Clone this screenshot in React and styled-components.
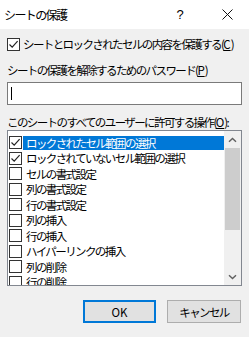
import React from "react";
import styled, { createGlobalStyle } from "styled-components";

const Global = createGlobalStyle`
  html, body { margin: 0; padding: 0; background: #f0f0f0; }
  body { width: 249px; height: 337px; overflow: hidden; }
  * { box-sizing: border-box; }
`;

const FONT = `"Noto Sans CJK JP", "Noto Sans", sans-serif`;

const Window = styled.div`
  width: 249px;
  height: 337px;
  display: flex;
  flex-direction: column;
  font-family: ${FONT};
  font-size: 11.5px;
  letter-spacing: -1.6px;
  color: #000;
  white-space: nowrap;
`;

const TitleBar = styled.div`
  height: 29px;
  flex: none;
  background: #fff;
  display: flex;
  align-items: center;
  padding-left: 4px;
`;

const Title = styled.div`
  flex: 1;
  font-size: 12px;
  line-height: 14px;
`;

const TitleButton = styled.div`
  width: ${(p) => p.$w}px;
  margin-right: ${(p) => p.$mr}px;
  height: 29px;
  display: flex;
  align-items: center;
  justify-content: center;
  font-size: 13px;
  font-family: "Liberation Sans", sans-serif;
  letter-spacing: 0;
`;

const Body = styled.div`
  flex: 1;
  background: #f0f0f0;
  padding: 7px 7px 0 7px;
  display: flex;
  flex-direction: column;
`;

const CheckRow = styled.label`
  display: flex;
  align-items: center;
  height: 16px;
  gap: 3px;
  line-height: 14px;
`;

const Box = styled.span`
  width: 13px;
  height: 13px;
  flex: none;
  background: #fff;
  border: 1px solid #333;
  display: flex;
  align-items: center;
  justify-content: center;
`;

const Label = styled.div`
  line-height: 14px;
  margin-top: ${(p) => p.$mt}px;
`;

const U = styled.span`
  text-decoration: underline;
  text-underline-offset: 1px;
  letter-spacing: 0;
`;

const Input = styled.div`
  margin-top: 5px;
  height: 23px;
  width: 235px;
  background: #fff;
  border: 1px solid #7a7a7a;
  display: flex;
  align-items: center;
  padding-left: 3px;
`;

const Caret = styled.span`
  width: 1px;
  height: 13px;
  background: #000;
`;

const ListBox = styled.div`
  margin-top: 1px;
  height: 156px;
  width: 235px;
  background: #fff;
  border: 1px solid #828790;
  display: flex;
  overflow: hidden;
`;

const Items = styled.div`
  flex: 1;
  padding-top: 4px;
  padding-left: 1px;
  display: flex;
  flex-direction: column;
`;

const Item = styled.div`
  height: 15.5px;
  flex: none;
  display: flex;
  align-items: center;
`;

const ItemText = styled.span`
  flex: 1;
  height: 14px;
  line-height: 14px;
  margin-left: 1px;
  padding-left: 3px;
  background: ${(p) => (p.$sel ? "#0078d7" : "transparent")};
  color: ${(p) => (p.$sel ? "#fff" : "#000")};
`;

const ScrollBar = styled.div`
  width: 17px;
  flex: none;
  background: #f0f0f0;
  display: flex;
  flex-direction: column;
`;

const Arrow = styled.div`
  height: 17px;
  flex: none;
  display: flex;
  align-items: center;
  justify-content: center;
`;

const Thumb = styled.div`
  height: 82px;
  margin: 0 1px;
  background: #cdcdcd;
  flex: none;
`;

const Track = styled.div`
  flex: 1;
`;

const Buttons = styled.div`
  margin-top: 14px;
  display: flex;
  justify-content: flex-end;
  gap: 11px;
  padding-right: 1px;
`;

const Button = styled.div`
  width: ${(p) => p.$w}px;
  height: 23px;
  background: #e1e1e1;
  border: ${(p) => (p.$default ? "2px solid #0078d7" : "1px solid #adadad")};
  display: flex;
  align-items: center;
  justify-content: center;
  line-height: 14px;
  letter-spacing: ${(p) => (p.$default ? "0" : "-1.6px")};
`;

const Check = () => (
  <svg width="11" height="11" viewBox="0 0 11 11">
    <path d="M1.5 5.5 L4.2 8.2 L9.6 2.2" fill="none" stroke="#222" strokeWidth="1.2" />
  </svg>
);

const Chevron = ({ down }) => (
  <svg width="9" height="6" viewBox="0 0 9 6">
    <path
      d={down ? "M1 1.2 L4.5 4.6 L8 1.2" : "M1 4.8 L4.5 1.4 L8 4.8"}
      fill="none"
      stroke="#606060"
      strokeWidth="1.4"
    />
  </svg>
);

const items = [
  ["ロックされたセル範囲の選択", true, true],
  ["ロックされていないセル範囲の選択", true, false],
  ["セルの書式設定", false, false],
  ["列の書式設定", false, false],
  ["行の書式設定", false, false],
  ["列の挿入", false, false],
  ["行の挿入", false, false],
  ["ハイパーリンクの挿入", false, false],
  ["列の削除", false, false],
  ["行の削除", false, false],
];

export default function App() {
  return (
    <>
      <Global />
      <Window>
        <TitleBar>
          <Title>シートの保護</Title>
          <TitleButton $w={20} $mr={22}>?</TitleButton>
          <TitleButton $w={30} $mr={7}>
            <svg width="11" height="11" viewBox="0 0 11 11">
              <path d="M0.5 0.5 L10.5 10.5 M10.5 0.5 L0.5 10.5" stroke="#111" strokeWidth="1" />
            </svg>
          </TitleButton>
        </TitleBar>
        <Body>
          <CheckRow>
            <Box>
              <Check />
            </Box>
            <span>
              シートとロックされたセルの内容を保護する(<U>C</U>)
            </span>
          </CheckRow>
          <Label $mt={11}>
            シートの保護を解除するためのパスワード(<U>P</U>)
          </Label>
          <Input>
            <Caret />
          </Input>
          <Label $mt={10}>
            このシートのすべてのユーザーに許可する操作(<U>O</U>):
          </Label>
          <ListBox>
            <Items>
              {items.map(([t, c, s]) => (
                <Item key={t}>
                  <Box>{c && <Check />}</Box>
                  <ItemText $sel={s}>{t}</ItemText>
                </Item>
              ))}
            </Items>
            <ScrollBar>
              <Arrow>
                <Chevron />
              </Arrow>
              <Thumb />
              <Track />
              <Arrow>
                <Chevron down />
              </Arrow>
            </ScrollBar>
          </ListBox>
          <Buttons>
            <Button $w={73} $default>OK</Button>
            <Button $w={74}>キャンセル</Button>
          </Buttons>
        </Body>
      </Window>
    </>
  );
}
